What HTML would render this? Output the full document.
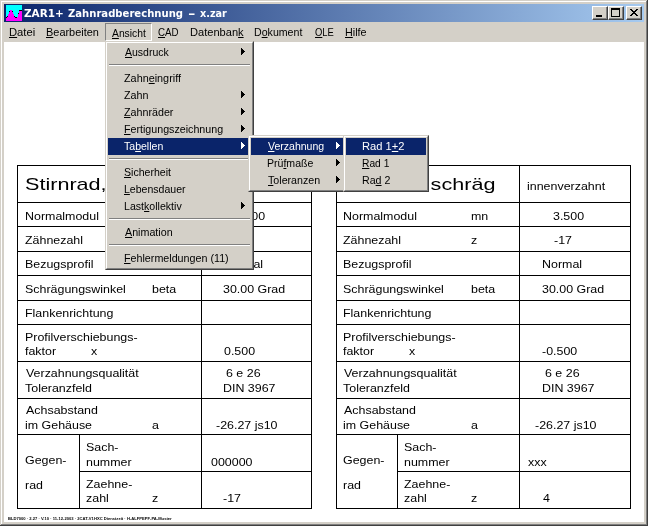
<!DOCTYPE html>
<html lang="de"><head><meta charset="utf-8"><title>ZAR1+ Zahnradberechnung - x.zar</title>
<style>html,body{margin:0;padding:0;width:648px;height:526px;overflow:hidden;background:#D4D0C8}
#win{position:absolute;left:0;top:0;width:648px;height:526px;background:#D4D0C8;overflow:hidden}
#win div,#win span,#win svg{position:absolute}
.t{white-space:pre;transform-origin:0 0;line-height:20px;height:20px;color:#000}
.t u{text-decoration:underline;text-decoration-thickness:1px;text-underline-offset:1px;text-decoration-skip-ink:none}
.f11{font:11px/20px "Liberation Sans",sans-serif}
.fb{font:bold 11px/20px "DejaVu Sans","Liberation Sans",sans-serif}
.f17{font:17px/20px "Liberation Sans",sans-serif}
.f4{font:bold 4px/20px "Liberation Sans",sans-serif}
.w{color:#fff}
#tl,#tr,#ft,#caption,#menubar,#m1t,#m2t,#m3t{will-change:transform;left:0;top:0;width:648px;height:526px}
.menu{background:#D4D0C8;box-sizing:border-box;border:1px solid;border-color:#D4D0C8 #404040 #404040 #D4D0C8}
.menu>.in{left:0;top:0;right:0;bottom:0;box-sizing:border-box;border:1px solid;border-color:#fff #808080 #808080 #fff}
.sepd{height:1px;background:#808080}.sepw{height:1px;background:#fff}
.hl{background:#0A246A}
.ln{background:#000}
.btn{width:16px;height:14px;background:#D4D0C8;box-sizing:border-box;border:1px solid;border-color:#fff #404040 #404040 #fff}
.btn>.in{left:0;top:0;width:13px;height:11px;border:solid #808080;border-width:0 1px 1px 0}
</style></head><body>
<div id="win">
<div style="left:1px;top:1px;width:646px;height:1px;background:#fff"></div><div style="left:1px;top:1px;width:1px;height:524px;background:#fff"></div><div style="left:646px;top:1px;width:1px;height:524px;background:#808080"></div><div style="left:1px;top:524px;width:646px;height:1px;background:#808080"></div><div style="left:647px;top:0;width:1px;height:526px;background:#404040"></div><div style="left:0;top:525px;width:648px;height:1px;background:#404040"></div>
<div id="title" style="left:4px;top:4px;width:640px;height:18px;background:linear-gradient(to right,#0A246A,#A6CAF0)"></div>
<svg style="left:6px;top:5px" width="16" height="16" viewBox="0 0 16 16" shape-rendering="crispEdges"><rect width="16" height="16" fill="#00FFFF"/><path d="M0 16V13H1V12H2V9H3V7H4V5H6V7H7V9H8V12H9V13H11V12H12V9H13V6H16V16Z" fill="#FF00FF"/><path d="M0 12h1v1h-1zM1 11h1v1h-1zM3 6h1v1h-1zM6 6h1v1h-1zM8 11h1v1h-1zM9 12h2v1h-2zM12 8h1v1h-1zM13 5h3v1h-3z" fill="#000"/></svg>
<div class="btn" style="left:592px;top:6px"><div class="in"></div><div style="left:3px;top:8px;width:6px;height:2px;background:#000"></div></div><div class="btn" style="left:608px;top:6px"><div class="in"></div><div style="left:2px;top:1px;width:9px;height:9px;box-sizing:border-box;border:1px solid #000;border-top-width:2px"></div></div><div class="btn" style="left:626px;top:6px"><div class="in"></div><svg style="left:3px;top:2px" width="8" height="7" viewBox="0 0 8 7" shape-rendering="crispEdges"><path d="M0 0h2v1h1v1h2v-1h1v-1h2v1h-1v1h-1v1h-1v1h1v1h1v1h1v1h-2v-1h-1v-1h-2v1h-1v1h-2v-1h1v-1h1v-1h1v-1h-1v-1h-1v-1h-1z" fill="#000"/></svg></div>
<div id="client" style="left:4px;top:42px;width:640px;height:480px;background:#fff"></div>
<div style="left:105px;top:23px;width:47px;height:18px;box-sizing:border-box;border:1px solid;border-color:#808080 #fff #fff #808080"></div>
<div id="tabL"><div class="ln" style="left:17px;top:165px;width:295px;height:1px"></div><div class="ln" style="left:17px;top:202px;width:295px;height:1px"></div><div class="ln" style="left:17px;top:226px;width:295px;height:1px"></div><div class="ln" style="left:17px;top:251px;width:295px;height:1px"></div><div class="ln" style="left:17px;top:275px;width:295px;height:1px"></div><div class="ln" style="left:17px;top:300px;width:295px;height:1px"></div><div class="ln" style="left:17px;top:324px;width:295px;height:1px"></div><div class="ln" style="left:17px;top:361px;width:295px;height:1px"></div><div class="ln" style="left:17px;top:398px;width:295px;height:1px"></div><div class="ln" style="left:17px;top:434px;width:295px;height:1px"></div><div class="ln" style="left:17px;top:508px;width:295px;height:1px"></div><div class="ln" style="left:79px;top:471px;width:232px;height:1px"></div><div class="ln" style="left:17px;top:165px;width:1px;height:344px"></div><div class="ln" style="left:201px;top:165px;width:1px;height:344px"></div><div class="ln" style="left:311px;top:165px;width:1px;height:344px"></div><div class="ln" style="left:79px;top:434px;width:1px;height:75px"></div></div>
<div id="tabR"><div class="ln" style="left:336px;top:165px;width:295px;height:1px"></div><div class="ln" style="left:336px;top:202px;width:295px;height:1px"></div><div class="ln" style="left:336px;top:226px;width:295px;height:1px"></div><div class="ln" style="left:336px;top:251px;width:295px;height:1px"></div><div class="ln" style="left:336px;top:275px;width:295px;height:1px"></div><div class="ln" style="left:336px;top:300px;width:295px;height:1px"></div><div class="ln" style="left:336px;top:324px;width:295px;height:1px"></div><div class="ln" style="left:336px;top:361px;width:295px;height:1px"></div><div class="ln" style="left:336px;top:398px;width:295px;height:1px"></div><div class="ln" style="left:336px;top:434px;width:295px;height:1px"></div><div class="ln" style="left:336px;top:508px;width:295px;height:1px"></div><div class="ln" style="left:397px;top:471px;width:233px;height:1px"></div><div class="ln" style="left:336px;top:165px;width:1px;height:344px"></div><div class="ln" style="left:519px;top:165px;width:1px;height:344px"></div><div class="ln" style="left:630px;top:165px;width:1px;height:344px"></div><div class="ln" style="left:397px;top:434px;width:1px;height:75px"></div></div>
<div id="tl"><span class="t f17" style="left:24.82px;top:175.00px;transform:scaleX(1.2700);">Stirnrad, schräg</span>
<span class="t f11" style="left:24.58px;top:206.00px;transform:scaleX(1.1300);">Normalmodul</span>
<span class="t f11" style="left:151.67px;top:206.00px;transform:scaleX(1.1300);">mn</span>
<span class="t f11" style="left:25.21px;top:230.00px;transform:scaleX(1.1300);">Zähnezahl</span>
<span class="t f11" style="left:152.00px;top:230.00px;transform:scaleX(1.1300);">z</span>
<span class="t f11" style="left:24.58px;top:254.00px;transform:scaleX(1.1300);">Bezugsprofil</span>
<span class="t f11" style="left:25.04px;top:279.00px;transform:scaleX(1.1300);">Schrägungswinkel</span>
<span class="t f11" style="left:151.70px;top:279.00px;transform:scaleX(1.1300);">beta</span>
<span class="t f11" style="left:24.58px;top:303.00px;transform:scaleX(1.1300);">Flankenrichtung</span>
<span class="t f11" style="left:233.63px;top:206.00px;transform:scaleX(1.1300);">3.500</span>
<span class="t f11" style="left:237.05px;top:230.00px;transform:scaleX(1.1300);">17</span>
<span class="t f11" style="left:222.78px;top:254.00px;transform:scaleX(1.1300);">Normal</span>
<span class="t f11" style="left:223.33px;top:279.00px;transform:scaleX(1.1300);">30.00 Grad</span>
<span class="t f11" style="left:24.58px;top:327.00px;transform:scaleX(1.1300);">Profilverschiebungs-</span>
<span class="t f11" style="left:25.42px;top:341.00px;transform:scaleX(1.1300);">faktor</span>
<span class="t f11" style="left:90.66px;top:341.00px;transform:scaleX(1.1300);">x</span>
<span class="t f11" style="left:223.51px;top:341.00px;transform:scaleX(1.1300);">0.500</span>
<span class="t f11" style="left:25.55px;top:363.00px;transform:scaleX(1.1300);">Verzahnungsqualität</span>
<span class="t f11" style="left:25.32px;top:378.00px;transform:scaleX(1.1300);">Toleranzfeld</span>
<span class="t f11" style="left:226.17px;top:363.00px;transform:scaleX(1.1300);">6 e 26</span>
<span class="t f11" style="left:222.98px;top:378.00px;transform:scaleX(1.1300);">DIN 3967</span>
<span class="t f11" style="left:25.58px;top:400.00px;transform:scaleX(1.1300);">Achsabstand</span>
<span class="t f11" style="left:24.77px;top:415.00px;transform:scaleX(1.1300);">im Gehäuse</span>
<span class="t f11" style="left:151.97px;top:415.00px;transform:scaleX(1.1300);">a</span>
<span class="t f11" style="left:215.65px;top:415.00px;transform:scaleX(1.1300);">-26.27 js10</span>
<span class="t f11" style="left:25.37px;top:450.00px;transform:scaleX(1.1300);">Gegen-</span>
<span class="t f11" style="left:25.17px;top:475.00px;transform:scaleX(1.1300);">rad</span>
<span class="t f11" style="left:86.04px;top:437.00px;transform:scaleX(1.1300);">Sach-</span>
<span class="t f11" style="left:85.77px;top:452.00px;transform:scaleX(1.1300);">nummer</span>
<span class="t f11" style="left:211.41px;top:452.00px;transform:scaleX(1.1300);">000000</span>
<span class="t f11" style="left:86.21px;top:474.00px;transform:scaleX(1.1300);">Zaehne-</span>
<span class="t f11" style="left:86.10px;top:488.00px;transform:scaleX(1.1300);">zahl</span>
<span class="t f11" style="left:151.80px;top:488.00px;transform:scaleX(1.1300);">z</span>
<span class="t f11" style="left:222.65px;top:488.00px;transform:scaleX(1.1300);">-17</span></div>
<div id="tr"><span class="t f17" style="left:342.82px;top:175.00px;transform:scaleX(1.2700);">Stirnrad, schräg</span>
<span class="t f11" style="left:527.17px;top:176.00px;transform:scaleX(1.1300);">innenverzahnt</span>
<span class="t f11" style="left:342.58px;top:206.00px;transform:scaleX(1.1300);">Normalmodul</span>
<span class="t f11" style="left:470.67px;top:206.00px;transform:scaleX(1.1300);">mn</span>
<span class="t f11" style="left:343.21px;top:230.00px;transform:scaleX(1.1300);">Zähnezahl</span>
<span class="t f11" style="left:471.00px;top:230.00px;transform:scaleX(1.1300);">z</span>
<span class="t f11" style="left:342.58px;top:254.00px;transform:scaleX(1.1300);">Bezugsprofil</span>
<span class="t f11" style="left:343.04px;top:279.00px;transform:scaleX(1.1300);">Schrägungswinkel</span>
<span class="t f11" style="left:470.70px;top:279.00px;transform:scaleX(1.1300);">beta</span>
<span class="t f11" style="left:342.58px;top:303.00px;transform:scaleX(1.1300);">Flankenrichtung</span>
<span class="t f11" style="left:552.63px;top:206.00px;transform:scaleX(1.1300);">3.500</span>
<span class="t f11" style="left:553.55px;top:230.00px;transform:scaleX(1.1300);">-17</span>
<span class="t f11" style="left:541.78px;top:254.00px;transform:scaleX(1.1300);">Normal</span>
<span class="t f11" style="left:542.33px;top:279.00px;transform:scaleX(1.1300);">30.00 Grad</span>
<span class="t f11" style="left:342.58px;top:327.00px;transform:scaleX(1.1300);">Profilverschiebungs-</span>
<span class="t f11" style="left:343.42px;top:341.00px;transform:scaleX(1.1300);">faktor</span>
<span class="t f11" style="left:408.66px;top:341.00px;transform:scaleX(1.1300);">x</span>
<span class="t f11" style="left:541.75px;top:341.00px;transform:scaleX(1.1300);">-0.500</span>
<span class="t f11" style="left:343.55px;top:363.00px;transform:scaleX(1.1300);">Verzahnungsqualität</span>
<span class="t f11" style="left:343.32px;top:378.00px;transform:scaleX(1.1300);">Toleranzfeld</span>
<span class="t f11" style="left:545.17px;top:363.00px;transform:scaleX(1.1300);">6 e 26</span>
<span class="t f11" style="left:541.98px;top:378.00px;transform:scaleX(1.1300);">DIN 3967</span>
<span class="t f11" style="left:343.58px;top:400.00px;transform:scaleX(1.1300);">Achsabstand</span>
<span class="t f11" style="left:342.77px;top:415.00px;transform:scaleX(1.1300);">im Gehäuse</span>
<span class="t f11" style="left:470.97px;top:415.00px;transform:scaleX(1.1300);">a</span>
<span class="t f11" style="left:534.65px;top:415.00px;transform:scaleX(1.1300);">-26.27 js10</span>
<span class="t f11" style="left:343.37px;top:450.00px;transform:scaleX(1.1300);">Gegen-</span>
<span class="t f11" style="left:343.17px;top:475.00px;transform:scaleX(1.1300);">rad</span>
<span class="t f11" style="left:404.04px;top:437.00px;transform:scaleX(1.1300);">Sach-</span>
<span class="t f11" style="left:403.77px;top:452.00px;transform:scaleX(1.1300);">nummer</span>
<span class="t f11" style="left:528.36px;top:452.00px;transform:scaleX(1.1300);">xxx</span>
<span class="t f11" style="left:404.21px;top:474.00px;transform:scaleX(1.1300);">Zaehne-</span>
<span class="t f11" style="left:404.10px;top:488.00px;transform:scaleX(1.1300);">zahl</span>
<span class="t f11" style="left:470.80px;top:488.00px;transform:scaleX(1.1300);">z</span>
<span class="t f11" style="left:542.71px;top:488.00px;transform:scaleX(1.1300);">4</span></div>
<div id="ft"><span class="t f4" style="left:7.72px;top:509.00px;transform:scaleX(1.0304);">BLD7000 · 2.27 · V.10 · 11-12-2003 · 2CAT-V1HXC Dienstzeit · H-ALFPEPF-PA-Muster</span></div>
<div id="caption"><span class="t fb w" style="left:23.53px;top:4.00px;transform:scaleX(0.9509);">ZAR1+</span>
<span class="t fb w" style="left:68.05px;top:4.00px;transform:scaleX(0.9147);">Zahnradberechnung</span>
<span class="t fb w" style="left:187.93px;top:4.00px;transform:scaleX(1.6306);">-</span>
<span class="t fb w" style="left:199.85px;top:4.00px;transform:scaleX(0.8805);">x.zar</span></div>
<div id="menubar"><span class="t f11" style="left:9.08px;top:22.00px;transform:scaleX(1.0193);"><u>D</u>atei</span>
<span class="t f11" style="left:46.10px;top:22.00px;transform:scaleX(0.9944);"><u>B</u>earbeiten</span>
<span class="t f11" style="left:111.98px;top:23.00px;transform:scaleX(0.9369);"><u>A</u>nsicht</span>
<span class="t f11" style="left:157.71px;top:22.00px;transform:scaleX(0.8853);"><u>C</u>AD</span>
<span class="t f11" style="left:189.59px;top:22.00px;transform:scaleX(1.0073);">Datenban<u>k</u></span>
<span class="t f11" style="left:253.73px;top:22.00px;transform:scaleX(0.9644);">D<u>o</u>kument</span>
<span class="t f11" style="left:314.55px;top:22.00px;transform:scaleX(0.8564);"><u>O</u>LE</span>
<span class="t f11" style="left:345.12px;top:22.00px;transform:scaleX(0.9799);"><u>H</u>ilfe</span></div>
<div class="menu" id="m1" style="left:105px;top:41px;width:149px;height:229px"><div class="in"></div></div>
<div class="hl" style="left:108px;top:138px;width:143px;height:17px"></div><div class="sepd" style="left:109px;top:64px;width:141px"></div><div class="sepw" style="left:109px;top:65px;width:141px"></div><div class="sepd" style="left:109px;top:158px;width:141px"></div><div class="sepw" style="left:109px;top:159px;width:141px"></div><div class="sepd" style="left:109px;top:218px;width:141px"></div><div class="sepw" style="left:109px;top:219px;width:141px"></div><div class="sepd" style="left:109px;top:244px;width:141px"></div><div class="sepw" style="left:109px;top:245px;width:141px"></div><svg style="left:241px;top:48px" width="4" height="7" viewBox="0 0 4 7" shape-rendering="crispEdges"><path d="M0 0h1v1h1v1h1v1h1v1h-1v1h-1v1h-1v1h-1z" fill="#000"/></svg><svg style="left:241px;top:91px" width="4" height="7" viewBox="0 0 4 7" shape-rendering="crispEdges"><path d="M0 0h1v1h1v1h1v1h1v1h-1v1h-1v1h-1v1h-1z" fill="#000"/></svg><svg style="left:241px;top:108px" width="4" height="7" viewBox="0 0 4 7" shape-rendering="crispEdges"><path d="M0 0h1v1h1v1h1v1h1v1h-1v1h-1v1h-1v1h-1z" fill="#000"/></svg><svg style="left:241px;top:125px" width="4" height="7" viewBox="0 0 4 7" shape-rendering="crispEdges"><path d="M0 0h1v1h1v1h1v1h1v1h-1v1h-1v1h-1v1h-1z" fill="#000"/></svg><svg style="left:241px;top:142px" width="4" height="7" viewBox="0 0 4 7" shape-rendering="crispEdges"><path d="M0 0h1v1h1v1h1v1h1v1h-1v1h-1v1h-1v1h-1z" fill="#fff"/></svg><svg style="left:241px;top:202px" width="4" height="7" viewBox="0 0 4 7" shape-rendering="crispEdges"><path d="M0 0h1v1h1v1h1v1h1v1h-1v1h-1v1h-1v1h-1z" fill="#000"/></svg>
<div id="m1t"><span class="t f11" style="left:124.68px;top:42.00px;transform:scaleX(0.9553);"><u>A</u>usdruck</span>
<span class="t f11" style="left:124.36px;top:68.00px;transform:scaleX(0.9835);">Zahn<u>e</u>ingriff</span>
<span class="t f11" style="left:124.36px;top:85.00px;transform:scaleX(0.9746);">Zahn</span>
<span class="t f11" style="left:124.36px;top:102.00px;transform:scaleX(0.9737);"><u>Z</u>ahnräder</span>
<span class="t f11" style="left:124.32px;top:119.00px;transform:scaleX(0.9701);"><u>F</u>ertigungszeichnung</span>
<span class="t f11 w" style="left:124.46px;top:136.00px;transform:scaleX(0.9579);">Ta<u>b</u>ellen</span>
<span class="t f11" style="left:124.22px;top:162.00px;transform:scaleX(0.9600);"><u>S</u>icherheit</span>
<span class="t f11" style="left:124.34px;top:179.00px;transform:scaleX(0.9582);"><u>L</u>ebensdauer</span>
<span class="t f11" style="left:124.33px;top:196.00px;transform:scaleX(0.9631);">Last<u>k</u>ollektiv</span>
<span class="t f11" style="left:124.68px;top:222.00px;transform:scaleX(0.9735);"><u>A</u>nimation</span>
<span class="t f11" style="left:124.32px;top:248.00px;transform:scaleX(0.9743);"><u>F</u>ehlermeldungen (11)</span></div>
<div class="menu" id="m2" style="left:248px;top:135px;width:98px;height:57px"><div class="in"></div></div>
<div class="hl" style="left:251px;top:138px;width:92px;height:17px"></div><svg style="left:336px;top:142px" width="4" height="7" viewBox="0 0 4 7" shape-rendering="crispEdges"><path d="M0 0h1v1h1v1h1v1h1v1h-1v1h-1v1h-1v1h-1z" fill="#fff"/></svg><svg style="left:336px;top:159px" width="4" height="7" viewBox="0 0 4 7" shape-rendering="crispEdges"><path d="M0 0h1v1h1v1h1v1h1v1h-1v1h-1v1h-1v1h-1z" fill="#000"/></svg><svg style="left:336px;top:176px" width="4" height="7" viewBox="0 0 4 7" shape-rendering="crispEdges"><path d="M0 0h1v1h1v1h1v1h1v1h-1v1h-1v1h-1v1h-1z" fill="#000"/></svg>
<div id="m2t"><span class="t f11 w" style="left:267.95px;top:136.00px;transform:scaleX(0.9562);"><u>V</u>erzahnung</span>
<span class="t f11" style="left:267.13px;top:153.00px;transform:scaleX(0.9595);">Prü<u>f</u>maße</span>
<span class="t f11" style="left:267.76px;top:170.00px;transform:scaleX(0.9691);"><u>T</u>oleranzen</span></div>
<div class="menu" id="m3" style="left:343px;top:135px;width:86px;height:57px"><div class="in"></div></div>
<div class="hl" style="left:346px;top:138px;width:80px;height:17px"></div>
<div id="m3t"><span class="t f11 w" style="left:362.09px;top:136.00px;transform:scaleX(1.0139);">Rad 1<u>+</u>2</span>
<span class="t f11" style="left:362.16px;top:153.00px;transform:scaleX(0.9314);"><u>R</u>ad 1</span>
<span class="t f11" style="left:362.13px;top:170.00px;transform:scaleX(0.9678);">Ra<u>d</u> 2</span></div>
</div>
</body></html>
